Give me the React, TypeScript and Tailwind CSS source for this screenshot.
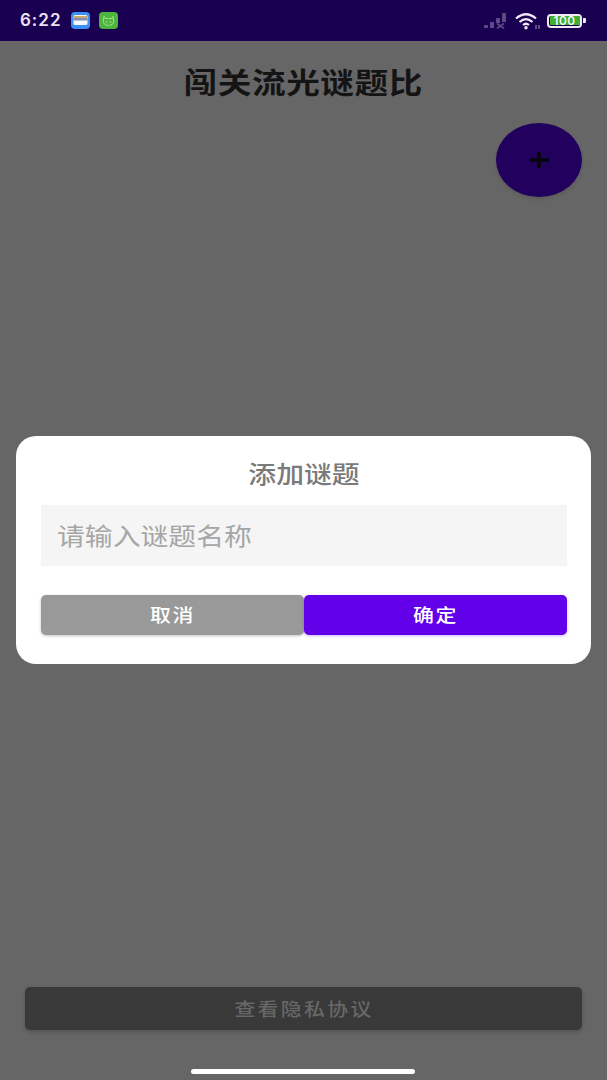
import React from 'react';

const cjk = { fontFamily: '"Noto Sans CJK SC", "Noto Sans", sans-serif' };

function StatusBar() {
  return (
    <div className="h-[41px] bg-[#1a0050] flex items-center justify-between pl-[20px] pr-[21px] shrink-0">
      <div className="flex items-center">
        <span className="text-[#e8e2f2] text-[17px] font-semibold tracking-[1px] font-['Inter',sans-serif] w-[51px]">6:22</span>
        <svg width="19" height="17" viewBox="0 0 19 17">
          <rect x="0" y="0" width="19" height="17" rx="4" fill="#3b90f5" />
          <rect x="2.5" y="3" width="14" height="10" rx="1.5" fill="#f4f7fc" />
          <rect x="2.5" y="4" width="14" height="2" fill="#c9a86a" />
          <rect x="2.5" y="6" width="14" height="2.5" fill="#8090b0" />
        </svg>
        <svg width="19" height="17" viewBox="0 0 19 17" className="ml-[9px]">
          <rect x="0" y="0" width="19" height="17" rx="4" fill="#4db53c" />
          <path d="M5 4.5 L6.2 6.5 H12.8 L14 4.5 L14.8 10 Q14 13.5 9.5 13.5 Q5 13.5 4.2 10 Z" fill="none" stroke="#b9e4b0" strokeWidth="0.8" />
          <circle cx="7.6" cy="10" r="0.8" fill="#b9e4b0" />
          <circle cx="11.4" cy="10" r="0.8" fill="#b9e4b0" />
        </svg>
      </div>
      <div className="flex items-center">
        <svg width="24" height="16" viewBox="0 0 24 16">
          <rect x="0" y="12" width="4" height="3" rx="0.5" fill="#5d4a85" />
          <rect x="6" y="9" width="4" height="6" rx="0.5" fill="#5d4a85" />
          <rect x="12" y="5" width="4" height="5" rx="0.5" fill="#5d4a85" />
          <rect x="18" y="0" width="4" height="9" rx="0.5" fill="#5d4a85" />
          <path d="M13 10.5 L20 15.5 M20 10.5 L13 15.5" stroke="#5d4a85" strokeWidth="1.6" />
        </svg>
        <svg width="26" height="18" viewBox="0 0 26 18" className="ml-[7px]">
          <path d="M1 6.5 Q11 -2 21 6.5" fill="none" stroke="#eee9f5" strokeWidth="2.2" />
          <path d="M4.5 10 Q11 4.2 17.5 10" fill="none" stroke="#eee9f5" strokeWidth="2.2" />
          <path d="M8 13 Q11 10.5 14 13" fill="none" stroke="#eee9f5" strokeWidth="2.2" />
          <circle cx="11" cy="15.8" r="1.7" fill="#eee9f5" />
          <path d="M21 13 V17 M24 13 V17" stroke="#8f84ab" strokeWidth="1.2" />
        </svg>
        <div className="ml-[6px] flex items-center">
          <div className="w-[35px] h-[14px] rounded-[4px] border-[2px] border-[#eee9f5] p-[0.5px]">
            <div className="w-full h-full bg-[#45ad32] rounded-[1px] flex items-center justify-center text-[12px] leading-none tracking-[0.5px] font-medium text-white font-['Inter',sans-serif]">
              100
            </div>
          </div>
          <div className="w-[3px] h-[5px] ml-[1px] bg-[#eee9f5] rounded-r-[1px]" />
        </div>
      </div>
    </div>
  );
}

function Wide({ children, className = '' }: { children: React.ReactNode; className?: string }) {
  return <span className={`inline-block scale-x-[1.16] ${className}`}>{children}</span>;
}

export default function App() {
  return (
    <div className="relative w-[607px] h-[1080px] overflow-hidden bg-[#666666] flex flex-col" style={cjk}>
      <StatusBar />

      <h1 className="mt-[22px] text-center text-[29px] leading-[36px] font-semibold text-[#141414]">
        <Wide className="tracking-[0.5px]">闯关流光谜题比</Wide>
      </h1>

      <div className="flex justify-end pr-[25px] mt-[24px]">
        <button className="w-[86px] h-[74px] rounded-[50%] bg-[#21005e] flex items-center justify-center shadow-[0_2px_4px_rgba(0,0,0,0.12)]">
          <svg width="20" height="20" viewBox="0 0 20 20">
            <path d="M10 2 V18 M0 10 H20" stroke="#05050c" strokeWidth="3.6" />
          </svg>
        </button>
      </div>

      <div className="flex-1" />

      <button className="mx-[25px] h-[43px] rounded-[5px] bg-[#393939] text-[#676767] text-[18px] font-medium shadow-[0_2px_4px_rgba(0,0,0,0.2)] mb-[50px]">
        <Wide className="tracking-[2px]">查看隐私协议</Wide>
      </button>

      {/* dialog over the dimmed page */}
      <div className="absolute left-[16px] top-[436px] w-[575px] h-[228px] rounded-[20px] bg-white pl-[25px] pr-[24px] pt-[20px]">
        <div className="text-center text-[24px] leading-[34px] font-medium text-[#7a7a7a]">
          <Wide>添加谜题</Wide>
        </div>
        <div className="mt-[15px] h-[61px] bg-[#f5f5f5] flex items-center px-[16px] pb-[2px] text-[24px] text-[#a6a6a6]">
          <Wide className="origin-left">请输入谜题名称</Wide>
        </div>
        <div className="mt-[29px] flex">
          <button className="flex-1 h-[40px] pb-[1px] rounded-[5px] bg-[#999999] text-white text-[18px] font-medium shadow-[0_1px_3px_rgba(0,0,0,0.25)]">
            <Wide className="tracking-[1.5px]">取消</Wide>
          </button>
          <button className="flex-1 h-[40px] pb-[1px] rounded-[5px] bg-[#6200ea] text-white text-[18px] font-medium shadow-[0_1px_3px_rgba(98,0,234,0.3)]">
            <Wide className="tracking-[1.5px]">确定</Wide>
          </button>
        </div>
      </div>

      <div className="absolute left-[191px] top-[1069px] w-[224px] h-[5px] rounded-full bg-white" />
    </div>
  );
}
